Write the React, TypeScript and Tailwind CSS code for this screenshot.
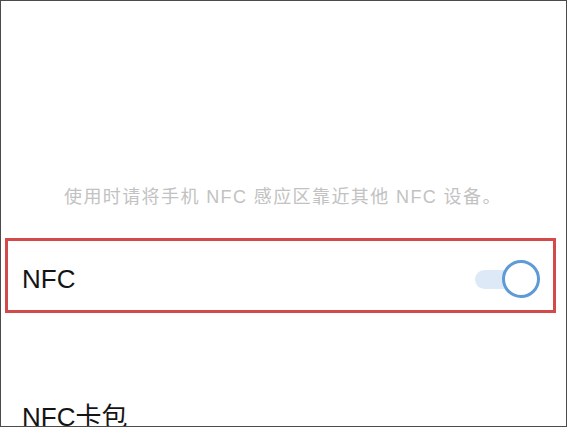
import { useState } from "react";

const latin = "font-['Liberation_Sans','Noto_Sans_CJK_SC',sans-serif]";

function Toggle({ on, onChange }: { on: boolean; onChange: () => void }) {
  return (
    <button
      type="button"
      onClick={onChange}
      className="relative flex h-[38px] w-[66px] shrink-0 items-center"
    >
      {/* track */}
      <span
        className={`ml-[1px] h-[19px] w-[56px] rounded-full ${
          on ? "bg-[#dde9f7]" : "bg-[#e6e6e6]"
        }`}
      />
      {/* knob */}
      <span
        className={`absolute top-0 h-[38px] w-[38px] rounded-full border-[3px] bg-white ${
          on ? "right-0 border-[#5d9ad6]" : "left-0 border-[#c8c8c8]"
        }`}
      />
    </button>
  );
}

export default function App() {
  const [nfc, setNfc] = useState(true);

  return (
    <div className="h-[428px] w-[569px] bg-white">
      <div
        className={`flex h-[427px] w-[567px] flex-col overflow-hidden border border-[#4b4b4b] bg-white ${latin}`}
      >
        {/* hint */}
        <p className="shrink-0 pt-[184px] pl-[63px] text-[18px] leading-[24px] tracking-[1.4px] text-[#c2c2c2]">
          使用时请将手机 NFC 感应区靠近其他 NFC 设备。
        </p>

        {/* NFC row */}
        <div className="ml-[4px] mt-[29px] flex h-[75px] w-[551px] shrink-0 items-center justify-between border-[3px] border-[#d24a4a] pl-[14px] pr-[13px] pt-[7px]">
          <span className="text-[26px] text-[#141414]">NFC</span>
          <Toggle on={nfc} onChange={() => setNfc(!nfc)} />
        </div>

        {/* wallet, runs past the bottom edge */}
        <div className="mt-[89px] shrink-0 pl-[21px] text-[26px] leading-[30px] text-[#141414]">
          NFC卡包
        </div>
      </div>
    </div>
  );
}
